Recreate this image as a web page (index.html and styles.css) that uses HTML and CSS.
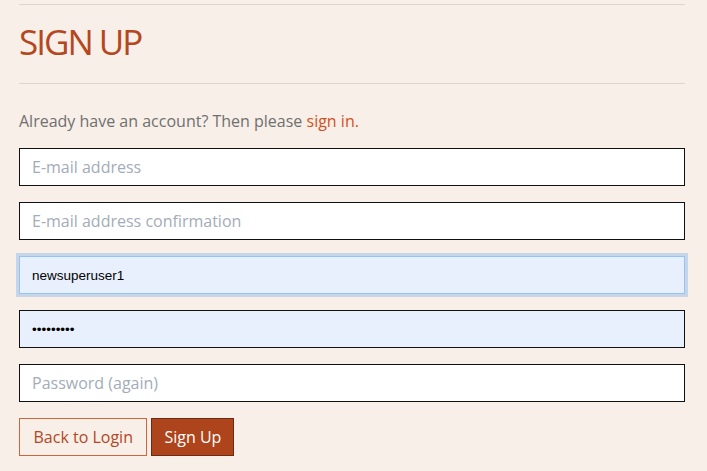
FILE: index.html
```html
<!DOCTYPE html>
<html>
<head>
<meta charset="utf-8">
<link rel="stylesheet" href="styles.css">
</head>
<body>
<main class="page">
  <hr class="rule">
  <h1 class="title">SIGN UP</h1>
  <hr class="rule">
  <p class="intro">Already have an account? Then please <a class="link" href="#">sign in.</a></p>
  <form class="form">
    <input class="field" type="email" placeholder="E-mail address">
    <input class="field" type="email" placeholder="E-mail address confirmation">
    <input class="field field-auto field-focus" type="text" value="newsuperuser1">
    <input class="field field-auto" type="password" value="123456789">
    <input class="field" type="password" placeholder="Password (again)">
    <div class="actions">
      <button type="button" class="btn btn-outline">Back to Login</button>
      <button type="button" class="btn btn-solid">Sign Up</button>
    </div>
  </form>
</main>
</body>
</html>
```

FILE: styles.css
```css
html, body {
  margin: 0;
  padding: 0;
  background: #f7efe8;
}
.page {
  padding: 0 22px 0 19px;
  font-family: "Open Sans", "Lato", sans-serif;
  color: #666a6e;
}
.rule {
  border: 0;
  border-top: 1px solid #dcd6d1;
  margin: 0;
}
.page > .rule:first-child {
  margin-top: 4px;
}
.title {
  margin: 0;
  padding: 18px 0 22px;
  font-family: "Open Sans", "Lato", sans-serif;
  font-size: 35px;
  font-weight: 400;
  line-height: 38px;
  color: #b5471f;
  letter-spacing: -2px;
}
.intro {
  margin: 26px 0 16px;
  font-size: 16px;
  line-height: 22px;
  color: #707070;
}
.link {
  color: #d2511e;
  text-decoration: none;
}
.form {
  display: flex;
  flex-direction: column;
  gap: 16px;
}
.field {
  box-sizing: border-box;
  height: 38px;
  width: 100%;
  margin: 0;
  border: 1px solid #111;
  background: #fff;
  padding: 0 12px;
  font-family: "Open Sans", "Lato", sans-serif;
  font-size: 16px;
  color: #222;
  border-radius: 0;
  outline: none;
}
.field::placeholder {
  color: #a3acb9;
}
.field-auto {
  background: #e8f0fe;
  font-family: "Liberation Sans", Arial, sans-serif;
  font-size: 13.5px;
  color: #000;
}
.field-focus {
  border-color: #94c3f7;
  box-shadow: 0 0 0 3px #c6d5e8;
}
.actions {
  display: flex;
  gap: 4px;
}
.btn {
  box-sizing: border-box;
  height: 38px;
  padding: 0 12px;
  font-family: "Open Sans", "Lato", sans-serif;
  font-size: 16px;
  border-radius: 0;
  cursor: pointer;
}
.btn-outline {
  background: transparent;
  border: 1px solid #d0653a;
  color: #b5471f;
  padding: 0 13.5px;
}
.btn-solid {
  background: #ad441b;
  border: 1px solid #6e2a10;
  color: #fff;
}
```
